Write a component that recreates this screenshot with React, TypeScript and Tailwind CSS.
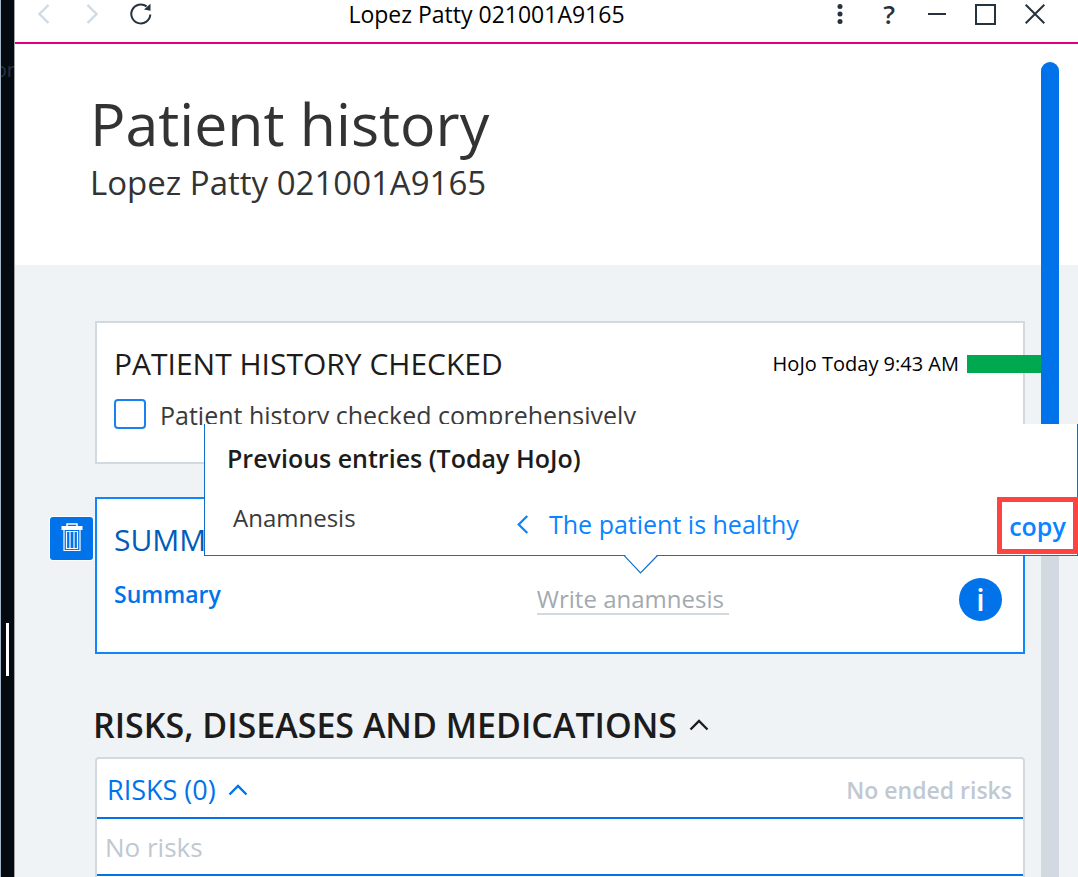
import React from "react";

type IconProps = { className?: string };

function ChevronLeft({ className }: IconProps) {
  return (
    <svg viewBox="0 0 12 20" className={className} fill="none" stroke="currentColor" strokeWidth="2.400">
      <path d="M10.5 1 1.5 10l9 9" />
    </svg>
  );
}

function ChevronRight({ className }: IconProps) {
  return (
    <svg viewBox="0 0 12 20" className={className} fill="none" stroke="currentColor" strokeWidth="2.400">
      <path d="m1.5 1 9 9-9 9" />
    </svg>
  );
}

function ChevronUp({ className }: IconProps) {
  return (
    <svg viewBox="0 0 20 12" className={className} fill="none" stroke="currentColor" strokeWidth="2.400">
      <path d="m1.5 10.5 8.500-8.500 8.500 8.500" />
    </svg>
  );
}

function ReloadIcon() {
  return (
    <svg viewBox="0 0 22 22" className="size-[22px]">
      <path d="M20.300 11.500A9.500 9.500 0 1 1 16.600 3.400" fill="none" stroke="#26323e" strokeWidth="2" />
      <path d="M20.500.8v6.900l-6.500-1.200z" fill="#26323e" />
    </svg>
  );
}

function MoreIcon() {
  return (
    <svg viewBox="0 0 6 20" className="h-5 w-[6px]" fill="#26323e">
      <circle cx="3" cy="2.500" r="2.500" />
      <circle cx="3" cy="10" r="2.500" />
      <circle cx="3" cy="17.500" r="2.500" />
    </svg>
  );
}

function MinimizeIcon() {
  return (
    <svg viewBox="0 0 18 22" className="h-[22px] w-[18px]" stroke="#26323e" strokeWidth="2">
      <path d="M0 11h18" />
    </svg>
  );
}

function MaximizeIcon() {
  return (
    <svg viewBox="0 0 21 21" className="size-[21px]" fill="none" stroke="#26323e" strokeWidth="2">
      <path d="M1 1h19v19H1z" />
    </svg>
  );
}

function CloseIcon() {
  return (
    <svg viewBox="0 0 20 20" className="size-5" fill="none" stroke="#26323e" strokeWidth="2">
      <path d="m.7.7 18.600 18.600M19.300.7.7 19.300" />
    </svg>
  );
}

function TrashIcon() {
  return (
    <svg viewBox="0 0 22 29" className="h-[29px] w-[22px]" fill="none" stroke="#fff">
      <path d="M6 3.500V1h10v2.500" strokeWidth="1.500" />
      <path d="M0.500 5h21" strokeWidth="4" />
      <path d="M3 7v20.500h16V7" strokeWidth="1.200" />
      <path d="M5.500 8.500h11v17h-11zM9 8.500v17M13 8.500v17" strokeWidth="1.200" />
    </svg>
  );
}

function Toolbar() {
  return (
    <header className="relative flex h-11 shrink-0 items-start justify-between border-b-2 border-[#e0007a] bg-white pr-[33px] pl-[22px]">
      <nav className="flex h-7 items-center text-[#d0dae4]">
        <button type="button" aria-label="Back" className="px-[1px]">
          <ChevronLeft className="h-5 w-3" />
        </button>
        <button type="button" aria-label="Forward" className="ml-[34px] px-[1px]">
          <ChevronRight className="h-5 w-3" />
        </button>
        <button type="button" aria-label="Reload" className="ml-[31px]">
          <ReloadIcon />
        </button>
      </nav>
      <p className="pointer-events-none absolute inset-x-0 top-0 pr-[120px] text-center text-[23px] leading-7 text-black">
        Lopez Patty 021001A9165
      </p>
      <div className="flex h-7 items-center">
        <button type="button" aria-label="More">
          <MoreIcon />
        </button>
        <button type="button" aria-label="Help" className="ml-10 text-[26px] leading-7 font-semibold text-[#26323e]">
          ?
        </button>
        <button type="button" aria-label="Minimize" className="ml-[33px]">
          <MinimizeIcon />
        </button>
        <button type="button" aria-label="Maximize" className="ml-[29px]">
          <MaximizeIcon />
        </button>
        <button type="button" aria-label="Close" className="ml-[29px]">
          <CloseIcon />
        </button>
      </div>
    </header>
  );
}

function PreviousEntries() {
  return (
    <div
      role="dialog"
      aria-label="Previous entries"
      className="absolute -right-[55px] bottom-[96px] left-[107px] z-20 h-[132px] border-x border-b border-[#1070cc] bg-white"
    >
      <h3 className="pt-[18px] pl-[22px] text-[25px] leading-8 font-semibold text-[#1c1c1c]">
        Previous entries (Today HoJo)
      </h3>
      <div className="flex items-start pl-7">
        <span className="mt-7 w-[284px] text-[24px] leading-8 text-[#3a3a3a]">Anamnesis</span>
        <button
          type="button"
          className="mt-[34px] flex items-center gap-5 text-[25px] leading-8 text-[#0a84ff]"
        >
          <ChevronLeft className="h-[19px] w-3" />
          The patient is healthy
        </button>
        <button
          type="button"
          className="mt-[23px] -mr-px ml-auto h-[57px] w-[81px] border-5 border-[#ff4343] text-[25px] leading-8 font-semibold text-[#0a84ff]"
        >
          copy
        </button>
      </div>
      <svg viewBox="0 0 34 19" className="absolute top-full left-[419px] h-[19px] w-[34px]">
        <path d="M0-1h34L17 18z" fill="#fff" />
        <path d="M0 0.500 16.500 18 33.500 0.500" fill="none" stroke="#1070cc" strokeWidth="1.200" />
      </svg>
    </div>
  );
}

export default function App() {
  return (
    <div className="flex h-screen overflow-hidden bg-[#f0f3f6] font-['Open_Sans','Noto_Sans',sans-serif]">
      <aside className="relative w-[15px] shrink-0 overflow-hidden border-r border-l border-r-[#a0a4a8] border-l-[#a3b4c6] bg-[#040a0e]">
        <span className="absolute top-[54px] -right-px text-[20px] leading-8 text-[#27333f]">or</span>
        <span className="absolute top-[623px] left-[5px] h-[53px] w-[3px] bg-white" />
      </aside>

      <div className="flex min-w-0 flex-1 flex-col">
        <Toolbar />

        <div className="relative min-h-0 flex-1 overflow-hidden">
          <div className="bg-white pt-[43px] pb-[58px] pl-[75px] text-[#333]">
            <h1 className="text-[59px] leading-[72px]">Patient history</h1>
            <p className="text-[33px] leading-[48px]">Lopez Patty 021001A9165</p>
          </div>

          <main className="pt-14 pr-[53px] pl-20">
            <section className="border-2 border-[#d2d9df] bg-white pt-[18px] pb-[31px] pl-[17px]">
              <div className="flex items-center">
                <h2 className="text-[30px] leading-[44px] text-[#1c1c1c]">PATIENT HISTORY CHECKED</h2>
                <span className="mr-2 ml-auto text-[20px] leading-[46px] text-black">HoJo Today 9:43 AM</span>
                <span className="-mr-[18px] h-[18px] w-[74px] bg-[#00a94f]" />
              </div>
              <label className="mt-3 flex items-start gap-[14px] text-[25px] leading-8 text-[#3a3a3a]">
                <input
                  type="checkbox"
                  className="h-[30px] w-8 shrink-0 appearance-none rounded-[4px] border-2 border-[#1a82f0] bg-white"
                />
                Patient history checked comprehensively
              </label>
            </section>

            <section className="relative mt-[33px] border-2 border-[#0f86fa] bg-white pt-[19px] pr-[21px] pb-[29px] pl-[17px]">
              <button
                type="button"
                aria-label="Delete summary"
                className="absolute top-[18px] -left-[47px] flex size-[43px] items-start justify-center rounded-[3px] bg-[#0073ea] pt-[6px] ring-1 ring-white"
              >
                <TrashIcon />
              </button>
              <h2 className="text-[30px] leading-[44px] text-[#005cbb]">SUMMARY</h2>
              <div className="mt-[13px] grid h-12 grid-cols-[10fr_11fr]">
                <label htmlFor="anamnesis" className="text-[23px] leading-[38px] font-semibold text-[#0073ea]">
                  Summary
                </label>
                <div className="flex items-center justify-between">
                  <input
                    id="anamnesis"
                    type="text"
                    placeholder="Write anamnesis"
                    className="h-8 w-[192px] border-b-2 border-[#d2d9df] text-[24px] leading-[30px] placeholder:text-[#a3a9b0]"
                  />
                  <button
                    type="button"
                    aria-label="Information"
                    className="size-[43px] rounded-full bg-[#0073ea] text-[30px] leading-[43px] font-semibold text-white"
                  >
                    i
                  </button>
                </div>
              </div>
              <PreviousEntries />
            </section>

            <h2 className="mt-[47px] text-[34px] leading-[48px] font-semibold text-[#1c1c1c]">
              <button type="button" className="-ml-0.5 flex items-center gap-3">
                RISKS, DISEASES AND MEDICATIONS
                <ChevronUp className="h-3 w-5" />
              </button>
            </h2>

            <section className="mt-2 rounded-[4px] border-2 border-[#d2d9df] bg-white">
              <div className="flex h-[60px] items-center justify-between border-b-2 border-[#0073ea] pt-1 pr-[11px] pl-[10px]">
                <button type="button" className="flex items-center gap-3 text-[27px] leading-9 text-[#0073ea]">
                  RISKS (0)
                  <ChevronUp className="h-3 w-5" />
                </button>
                <span className="text-[23px] leading-8 font-semibold text-[#c0c8d2]">No ended risks</span>
              </div>
              <p className="border-b-2 border-[#0073ea] pt-[10px] pb-[9px] pl-2 text-[26px] leading-9 text-[#c0c8d2]">
                No risks
              </p>
              <div className="h-14" />
            </section>
          </main>

          <div className="absolute top-[18px] right-[19px] bottom-0 z-10 w-[18px] rounded-t-full bg-[#d2d9e0]">
            <div className="h-[52%] rounded-full bg-[#0073ea]" />
          </div>
        </div>
      </div>
    </div>
  );
}
